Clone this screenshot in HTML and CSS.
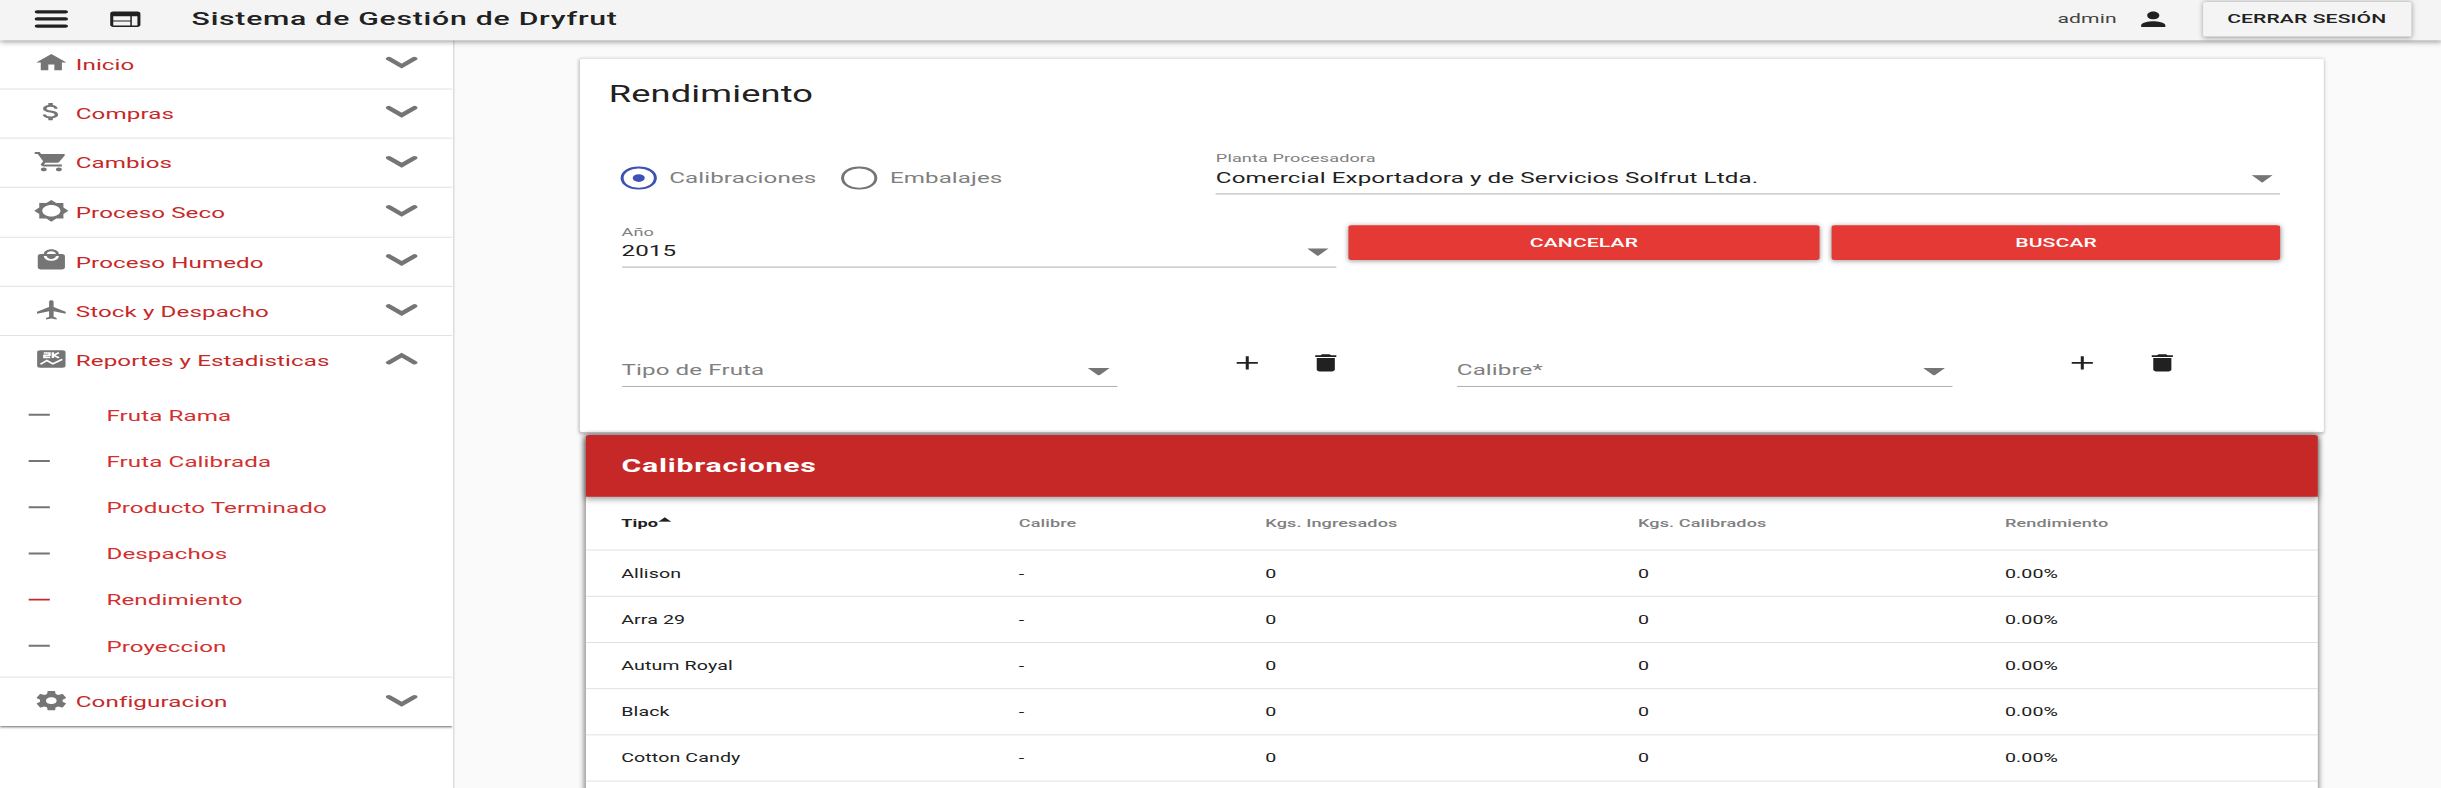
FILE: index.html
```html
<!DOCTYPE html>
<html lang="es">
<head>
<meta charset="utf-8">
<title>Sistema de Gestión de Dryfrut</title>
<link rel="stylesheet" href="styles.css">
</head>
<body>
<svg class="sprite" aria-hidden="true">
  <symbol id="menu" viewBox="0 0 24 24"><path d="M2.6 4.3H21.4M2.6 11.7H21.4M2.6 19.1H21.4" fill="none" stroke="currentColor" stroke-width="3.3" stroke-linecap="round"/></symbol>
  <symbol id="web" viewBox="0 0 24 24"><path fill-rule="evenodd" d="M20 4H4c-1.1 0-2 .9-2 2v12c0 1.1.9 2 2 2h16c1.1 0 2-.9 2-2V6c0-1.1-.9-2-2-2zM4 8.800h11.300v4.400H4zM4 14.300h11.300v4.300H4zM16.300 8.800H20v9.800h-3.700z"/></symbol>
  <symbol id="person" viewBox="0 0 24 24"><path d="M12 12c2.21 0 4-1.79 4-4s-1.79-4-4-4-4 1.79-4 4 1.79 4 4 4zm0 2c-2.67 0-8 1.34-8 4v2h16v-2c0-2.66-5.33-4-8-4z"/></symbol>
  <symbol id="home" viewBox="0 0 24 24"><path d="M10 20v-6h4v6h5v-8h3L12 3 2 12h3v8z"/></symbol>
  <symbol id="money" viewBox="0 0 24 24"><path d="M11.8 10.9c-2.27-.59-3-1.2-3-2.15 0-1.09 1.01-1.85 2.7-1.85 1.78 0 2.44.85 2.5 2.1h2.21c-.07-1.72-1.12-3.3-3.21-3.81V3h-3v2.16c-1.94.42-3.5 1.68-3.5 3.61 0 2.31 1.91 3.46 4.7 4.13 2.5.6 3 1.48 3 2.41 0 .69-.49 1.79-2.7 1.79-2.06 0-2.87-.92-2.98-2.1h-2.2c.12 2.19 1.76 3.42 3.68 3.83V21h3v-2.15c1.95-.37 3.5-1.5 3.5-3.55 0-2.84-2.43-3.81-4.7-4.4z"/></symbol>
  <symbol id="cart" viewBox="0 0 24 24"><path d="M7 18c-1.1 0-1.99.9-1.99 2S5.9 22 7 22s2-.9 2-2-.9-2-2-2zM1 2v2h2l3.6 7.59-1.35 2.45c-.16.28-.25.61-.25.96 0 1.1.9 2 2 2h12v-2H7.42c-.14 0-.25-.11-.25-.25l.03-.12.9-1.63h7.45c.75 0 1.41-.41 1.75-1.03l3.58-6.49c.08-.14.12-.31.12-.48 0-.55-.45-1-1-1H5.21l-.94-2H1zm16 16c-1.1 0-1.99.9-1.99 2s.89 2 1.99 2 2-.9 2-2-.9-2-2-2z"/></symbol>
  <symbol id="sun" viewBox="0 0 24 24"><path d="M20 15.31L23.31 12 20 8.69V4h-4.69L12 .69 8.69 4H4v4.69L.69 12 4 15.31V20h4.69L12 23.31 15.31 20H20v-4.69zM12 18c-3.31 0-6-2.69-6-6s2.69-6 6-6 6 2.69 6 6-2.69 6-6 6z"/></symbol>
  <symbol id="mall" viewBox="0 0 24 24"><path d="M19 6h-2c0-2.76-2.24-5-5-5S7 3.24 7 6H5c-1.1 0-1.99.9-1.99 2L3 20c0 1.1.9 2 2 2h14c1.1 0 2-.9 2-2V8c0-1.1-.9-2-2-2zm-7-3c1.66 0 3 1.34 3 3H9c0-1.66 1.34-3 3-3zm0 10c-2.76 0-5-2.24-5-5h2c0 1.66 1.34 3 3 3s3-1.34 3-3h2c0 2.76-2.24 5-5 5z"/></symbol>
  <symbol id="plane" viewBox="0 0 24 24"><path d="M21.500 16v-2l-8-5V3.5c0-.83-.67-1.5-1.5-1.5s-1.500.67-1.500 1.500V9l-8 5v2l8-2.500V19l-2 1.500V22l3.500-1 3.500 1v-1.500L13.500 19v-5.500l8 2.500z"/></symbol>
  <symbol id="report" viewBox="0 0 24 24"><rect x="2.600" y="3" width="18.800" height="18" rx="2"/><path d="M7 5.700H10.800V8H7.400V10.300H11.200M13 5V11M17 5.400L13.600 8.100L17 10.800M4.800 17.500L9 13.500L13 17L19.200 12.500" fill="none" stroke="#fff" stroke-width="1.600"/></symbol>
  <symbol id="gear" viewBox="0 0 24 24"><path d="M19.430 12.980c.04-.32.07-.64.07-.98s-.03-.66-.07-.98l2.110-1.650c.19-.15.24-.42.12-.64l-2-3.460c-.12-.22-.39-.3-.61-.22l-2.490 1c-.52-.4-1.080-.73-1.690-.98l-.38-2.650C14.460 2.180 14.250 2 14 2h-4c-.25 0-.46.18-.49.42l-.38 2.650c-.61.25-1.170.59-1.690.98l-2.490-1c-.23-.09-.49 0-.61.22l-2 3.460c-.13.22-.07.49.12.64l2.110 1.650c-.04.32-.07.65-.07.98s.03.66.07.98l-2.110 1.650c-.19.15-.24.42-.12.64l2 3.460c.12.22.39.3.61.22l2.490-1c.52.4 1.080.73 1.690.98l.38 2.650c.03.24.24.42.49.42h4c.25 0 .46-.18.49-.42l.38-2.650c.61-.25 1.170-.59 1.690-.98l2.490 1c.23.09.49 0 .61-.22l2-3.460c.12-.22.07-.49-.12-.64l-2.110-1.650zM12 15.500c-1.930 0-3.500-1.570-3.500-3.500s1.570-3.500 3.500-3.500 3.500 1.570 3.500 3.500-1.570 3.500-3.500 3.500z"/></symbol>
  <symbol id="more" viewBox="0 0 24 24"><path d="M6.900 9.600L12 14.200L17.100 9.600" fill="none" stroke="currentColor" stroke-width="2.300" stroke-linecap="round"/></symbol>
  <symbol id="less" viewBox="0 0 24 24"><path d="M6.900 14.200L12 9.600L17.100 14.200" fill="none" stroke="currentColor" stroke-width="2.300" stroke-linecap="round"/></symbol>
  <symbol id="remove" viewBox="0 0 24 24"><path d="M19 13H5v-2h14v2z"/></symbol>
  <symbol id="add" viewBox="0 0 24 24"><path d="M19 13h-6v6h-2v-6H5v-2h6V5h2v6h6v2z"/></symbol>
  <symbol id="delete" viewBox="0 0 24 24"><path d="M6 19c0 1.100.9 2 2 2h8c1.100 0 2-.9 2-2V7H6v12zM19 4h-3.500l-1-1h-5l-1 1H5v2h14V4z"/></symbol>
</svg>
<div class="app">
  <header class="topbar">
    <svg class="icon menu"><use href="#menu"/></svg>
    <svg class="icon web"><use href="#web"/></svg>
    <h1 class="brand">Sistema de Gestión de Dryfrut</h1>
    <span class="user">admin</span>
    <svg class="icon person"><use href="#person"/></svg>
    <button class="btn logout">CERRAR SESIÓN</button>
  </header>
  <div class="body">
    <aside class="sidebar">
      <nav class="nav">
        <div class="group"><a class="item"><svg class="icon"><use href="#home"/></svg><span>Inicio</span><svg class="chevron"><use href="#more"/></svg></a></div>
        <div class="group"><a class="item"><svg class="icon"><use href="#money"/></svg><span>Compras</span><svg class="chevron"><use href="#more"/></svg></a></div>
        <div class="group"><a class="item"><svg class="icon"><use href="#cart"/></svg><span>Cambios</span><svg class="chevron"><use href="#more"/></svg></a></div>
        <div class="group"><a class="item"><svg class="icon"><use href="#sun"/></svg><span>Proceso Seco</span><svg class="chevron"><use href="#more"/></svg></a></div>
        <div class="group"><a class="item"><svg class="icon"><use href="#mall"/></svg><span>Proceso Humedo</span><svg class="chevron"><use href="#more"/></svg></a></div>
        <div class="group"><a class="item"><svg class="icon"><use href="#plane"/></svg><span>Stock y Despacho</span><svg class="chevron"><use href="#more"/></svg></a></div>
        <div class="group">
          <a class="item"><svg class="icon"><use href="#report"/></svg><span>Reportes y Estadisticas</span><svg class="chevron"><use href="#less"/></svg></a>
          <div class="submenu">
            <a class="sub"><svg class="icon"><use href="#remove"/></svg><span>Fruta Rama</span></a>
            <a class="sub"><svg class="icon"><use href="#remove"/></svg><span>Fruta Calibrada</span></a>
            <a class="sub"><svg class="icon"><use href="#remove"/></svg><span>Producto Terminado</span></a>
            <a class="sub"><svg class="icon"><use href="#remove"/></svg><span>Despachos</span></a>
            <a class="sub active"><svg class="icon"><use href="#remove"/></svg><span>Rendimiento</span></a>
            <a class="sub"><svg class="icon"><use href="#remove"/></svg><span>Proyeccion</span></a>
          </div>
        </div>
        <div class="group"><a class="item"><svg class="icon"><use href="#gear"/></svg><span>Configuracion</span><svg class="chevron"><use href="#more"/></svg></a></div>
      </nav>
    </aside>
    <main class="main">
      <section class="card filters">
        <h2 class="heading">Rendimiento</h2>
        <div class="row first">
          <div class="radios">
            <span class="radio on"></span><span class="radio-label">Calibraciones</span>
            <span class="radio"></span><span class="radio-label">Embalajes</span>
          </div>
          <div class="field plant"><span class="label">Planta Procesadora</span><div class="value"><span>Comercial Exportadora y de Servicios Solfrut Ltda.</span><i class="caret"></i></div></div>
        </div>
        <div class="row second">
          <div class="field year"><span class="label">Año</span><div class="value"><span>2015</span><i class="caret"></i></div></div>
          <button class="btn red cancel">CANCELAR</button>
          <button class="btn red search">BUSCAR</button>
        </div>
        <div class="row third">
          <div class="picker"><div class="value empty"><span>Tipo de Fruta</span><i class="caret"></i></div><svg class="icon add"><use href="#add"/></svg><svg class="icon"><use href="#delete"/></svg></div>
          <div class="picker"><div class="value empty"><span>Calibre*</span><i class="caret"></i></div><svg class="icon add"><use href="#add"/></svg><svg class="icon"><use href="#delete"/></svg></div>
        </div>
      </section>
      <section class="results">
        <div class="results-bar">Calibraciones</div>
        <div class="tr th"><span class="sorted">Tipo<i class="sort"></i></span><span>Calibre</span><span>Kgs. Ingresados</span><span>Kgs. Calibrados</span><span>Rendimiento</span></div>
        <div class="tr"><span>Allison</span><span>-</span><span>0</span><span>0</span><span>0.00%</span></div>
        <div class="tr"><span>Arra 29</span><span>-</span><span>0</span><span>0</span><span>0.00%</span></div>
        <div class="tr"><span>Autum Royal</span><span>-</span><span>0</span><span>0</span><span>0.00%</span></div>
        <div class="tr"><span>Black</span><span>-</span><span>0</span><span>0</span><span>0.00%</span></div>
        <div class="tr"><span>Cotton Candy</span><span>-</span><span>0</span><span>0</span><span>0.00%</span></div>
        <div class="tr"></div>
      </section>
    </main>
  </div>
</div>
</body>
</html>
```
FILE: styles.css
```css
* { box-sizing: border-box; }
html, body { margin: 0; height: 788px; overflow: hidden; }
body { font-family: Roboto, "Liberation Sans", sans-serif; background: #fafafa; }
.sprite { display: none; }

.app {
  width: 1616.500px;
  height: 818.600px;
  margin-bottom: -31px;
  display: flex;
  flex-direction: column;
  overflow: hidden;
  background: #fafafa;
  color: #212121;
  letter-spacing: .06px;
  transform: scale(1.51, 0.9625);
  transform-origin: 0 0;
}
.icon { width: 24px; height: 24px; flex: none; fill: currentColor; }

.topbar {
  height: 41.5px;
  flex: none;
  display: flex;
  align-items: center;
  padding: 0 20px 2.500px 22.300px;
  background: #f4f4f4;
  box-shadow: 0 2px 5px rgba(0, 0, 0, .5);
  z-index: 2;
}
.web { margin-left: 24.300px; }
.brand { margin: 0 auto 1.500px 32.300px; font-size: 20px; font-weight: 500; letter-spacing: .49px; line-height: 24px; }
.user { padding-bottom: 2px; font-size: 14px; color: #424242; }
.person { margin: 0 20.500px 0 12.500px; }
.btn { border: 0; height: 36px; padding: 0 0 1px; border-radius: 2px; font: 500 14px Roboto, sans-serif; letter-spacing: .06px; color: #212121; box-shadow: 0 1px 4px rgba(0, 0, 0, .35); }
.logout { width: 137.700px; padding-bottom: 2px; background: #f4f4f4; }

.body { flex: 1; display: flex; min-height: 0; }
.sidebar { width: 300.500px; flex: none; background: #fff; border-right: 1px solid #dcdcdc; }
.nav { box-shadow: 0 1px 2px rgba(0, 0, 0, .6); clip-path: inset(0 0 -6px 0); }
.group { border-bottom: 1px solid #e0e0e0; color: #757575; }
.group:last-child { border-bottom: 0; }
.item { height: 50.300px; display: flex; align-items: center; padding: 0 13.700px 3px 22.300px; }
.item span { flex: 1; padding: 5px 0 0 3.900px; font-size: 16px; line-height: 20px; color: #c62828; white-space: nowrap; }
.chevron { width: 40px; height: 40px; fill: currentColor; }
.submenu { padding: 7.500px 0 8px; }
.sub { height: 48px; display: flex; align-items: center; gap: 32.300px; padding-left: 14.200px; }
.sub span { font-size: 16px; color: #d32f2f; }
.active .icon { color: #c62828; }

.main { flex: 1; padding: 19.800px 0 0 83.100px; }
.card { width: 1155.300px; height: 387.500px; background: #fff; border-radius: 2px; box-shadow: 0 1px 3px rgba(0, 0, 0, .3); padding: 0 28.500px 0 28px; }
.heading { margin: 0 0 0 -8.500px; padding-top: 23px; font-size: 24px; line-height: 28px; font-weight: 400; letter-spacing: .1px; }
.row { display: flex; }
.first { height: 41px; margin-top: 48.500px; justify-content: space-between; }
.radios { display: flex; align-items: center; height: 23.500px; margin: 12.400px 0 0 -.3px; }
.radio { width: 23.400px; height: 23.400px; border: 2px solid #757575; border-radius: 50%; display: flex; align-items: center; justify-content: center; }
.radio.on { border-color: #3f51b5; }
.radio.on::after { content: ""; width: 8px; height: 8px; border-radius: 50%; background: #3f51b5; }
.radio-label { margin: 0 16.800px 0 8.500px; font-size: 16px; color: #808080; }
.field { display: flex; flex-direction: column; }
.label { font-size: 12px; line-height: 14px; color: #808080; }
.value { height: 26.500px; display: flex; justify-content: space-between; border-bottom: 1px solid #adadad; font-size: 16px; line-height: 20px; }
.field .value { height: 30.500px; padding-top: 3.300px; }
.plant { width: 705.200px; margin-top: -3.500px; }
.caret { width: 14.500px; height: 8.200px; margin: 7px 5px 0 0; background: #757575; clip-path: polygon(0 0, 100% 0, 50% 100%); }
.second { height: 44px; margin-top: 32.300px; gap: 8px; }
.year { width: 473.500px; margin-top: -.5px; }
.red { background: #e53935; color: #fff; box-shadow: 0 1px 4px rgba(0, 0, 0, .4); }
.cancel { width: 312px; }
.search { width: 297.500px; }
.third { margin-top: 79.700px; }
.picker { width: 553.200px; flex: none; display: flex; }
.picker .value { width: 328.300px; margin-top: 17.500px; }
.picker .icon { margin-top: 7px; }
.empty { color: #808080; }
.picker .add { margin: 7px 28.600px 0 74px; }

.results { width: 1147.600px; margin: 3.700px 0 0 4px; background: #fff; border-radius: 2px; box-shadow: 0 2px 5px rgba(0, 0, 0, .6); }
.results-bar { height: 63.800px; padding: 0 0 2.500px 24px; display: flex; align-items: center; background: #c62828; color: #fff; font-size: 20px; font-weight: 700; letter-spacing: .5px; border-radius: 2px 2px 0 0; box-shadow: 0 2px 5px rgba(0, 0, 0, .4); }
.tr { height: 48px; display: grid; grid-template-columns: 263.300px 163.300px 246.800px 243px 1fr; align-items: center; padding-left: 23.800px; border-bottom: 1px solid #e0e0e0; font-size: 13px; }
.th { height: 56px; padding-top: 1px; font-size: 12px; font-weight: 500; color: #808080; }
.sorted { color: #212121; display: flex; font-weight: 700; }
.sort { width: 9px; height: 5px; margin-left: 0; background: #212121; clip-path: polygon(50% 0, 100% 100%, 0 100%); }
```
